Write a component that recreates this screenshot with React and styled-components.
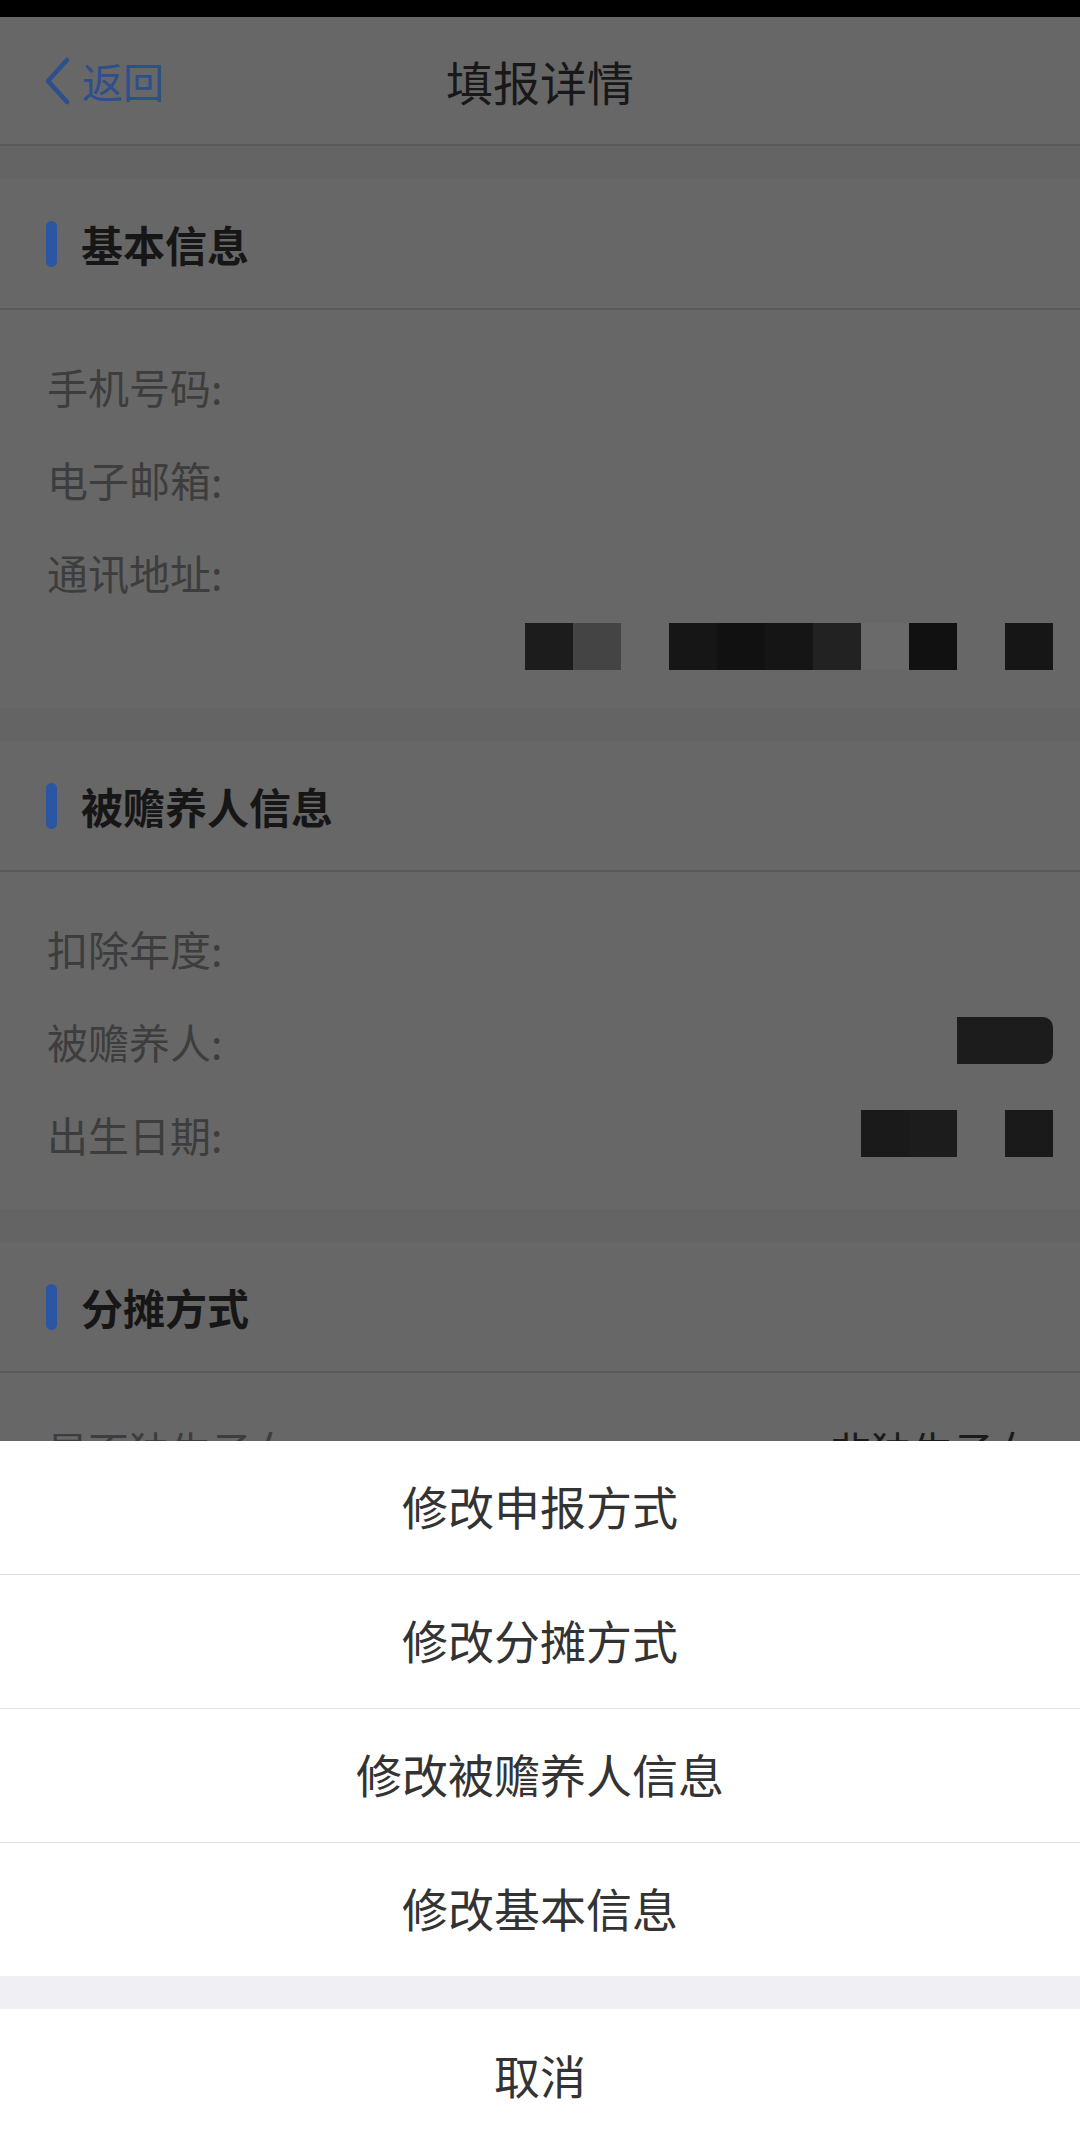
import React from "react";
import styled, { createGlobalStyle } from "styled-components";

const GlobalStyle = createGlobalStyle`
  html, body {
    margin: 0;
    padding: 0;
    background: #646464;
    overflow: hidden;
  }
  body {
    font-family: "Noto Sans CJK SC", "Noto Sans", sans-serif;
  }
`;

const Screen = styled.div`
  position: relative;
  width: 1080px;
  height: 2144px;
  overflow: hidden;
  background: #646464;
`;

const StatusBar = styled.div`
  height: 17px;
  background: #000;
`;

const NavBar = styled.div`
  height: 127px;
  display: grid;
  grid-template-columns: 1fr auto 1fr;
  align-items: center;
  padding: 0 43px;
  background: #676767;
  border-bottom: 2px solid #5a5a5a;
`;

const BackLink = styled.div`
  display: flex;
  align-items: center;
  gap: 11px;
  color: #2d4f8c;
  font-size: 41px;
  line-height: 1;
`;

const NavTitle = styled.div`
  font-size: 47px;
  color: #181818;
  line-height: 1;
`;

const Section = styled.section`
  margin-top: 33px;
  background: #676767;
`;

const SectionHeader = styled.div`
  height: 129px;
  display: flex;
  align-items: center;
  padding-left: 46px;
  border-bottom: 2px solid #5a5a5a;
`;

const Marker = styled.span`
  width: 11px;
  height: 46px;
  border-radius: 6px;
  background: #2a56a3;
`;

const HeaderText = styled.h2`
  margin: 0 0 0 24px;
  font-size: 42px;
  font-weight: 700;
  color: #161616;
  line-height: 1;
`;

const Content = styled.div`
  padding: 29px 0 29px;
`;

const Row = styled.div`
  height: 93px;
  display: flex;
  align-items: center;
  justify-content: space-between;
  padding: 0 27px 0 47px;
`;

const Label = styled.span`
  font-size: 41px;
  color: #3d3d3d;
`;

const Value = styled.span`
  font-size: 41px;
  color: #1b1b1b;
  padding-right: 18px;
`;

const MosaicLine = styled.div`
  display: flex;
  justify-content: flex-end;
  padding-right: 27px;
  margin: 5px 0 9px;
`;

const Mosaic = styled.div`
  display: flex;
`;

const Cell = styled.span`
  width: 48px;
  height: 47px;
  background: ${(p) => p.$tone || "transparent"};
  ${(p) => p.$soft && "border-radius: 0 10px 10px 0;"}
`;

const Sheet = styled.div`
  position: fixed;
  left: 0;
  right: 0;
  bottom: 0;
  background: #efeff4;
`;

const SheetGroup = styled.div`
  background: #fff;
`;

const SheetItem = styled.div`
  height: 127px;
  padding-bottom: 6px;
  display: flex;
  align-items: center;
  justify-content: center;
  font-size: 46px;
  color: #333;
  & + & {
    border-top: 1px solid #e2e2e2;
  }
`;

const CancelItem = styled(SheetItem)`
  margin-top: 33px;
  height: 129px;
  background: #fff;
`;

const Chevron = () => (
  <svg width="28" height="48" viewBox="0 0 28 48">
    <path d="M24 3 L5 24 L24 45" fill="none" stroke="#2d4f8c" strokeWidth="4.5" strokeLinecap="round" strokeLinejoin="round" />
  </svg>
);

const Blocks = ({ cells }) => (
  <Mosaic>
    {cells.map((c, i) => (
      <Cell key={i} $tone={c && c.tone} $soft={c && c.soft} />
    ))}
  </Mosaic>
);

const addressCells = [
  { tone: "#1c1c1c" },
  { tone: "#444444" },
  null,
  { tone: "#161616" },
  { tone: "#111111" },
  { tone: "#151515" },
  { tone: "#222222" },
  { tone: "#6a6a6a" },
  { tone: "#111111" },
  null,
  { tone: "#161616" },
];

const actions = ["修改申报方式", "修改分摊方式", "修改被赡养人信息", "修改基本信息"];

const App = () => {
  return (
    <Screen>
      <GlobalStyle />
      <StatusBar />
      <NavBar>
        <BackLink>
          <Chevron />
          返回
        </BackLink>
        <NavTitle>填报详情</NavTitle>
        <div />
      </NavBar>

      <Section>
        <SectionHeader>
          <Marker />
          <HeaderText>基本信息</HeaderText>
        </SectionHeader>
        <Content>
          <Row>
            <Label>手机号码:</Label>
          </Row>
          <Row>
            <Label>电子邮箱:</Label>
          </Row>
          <Row>
            <Label>通讯地址:</Label>
          </Row>
          <MosaicLine>
            <Blocks cells={addressCells} />
          </MosaicLine>
        </Content>
      </Section>

      <Section>
        <SectionHeader>
          <Marker />
          <HeaderText>被赡养人信息</HeaderText>
        </SectionHeader>
        <Content>
          <Row>
            <Label>扣除年度:</Label>
          </Row>
          <Row>
            <Label>被赡养人:</Label>
            <Blocks cells={[{ tone: "#1c1c1c" }, { tone: "#1c1c1c", soft: true }]} />
          </Row>
          <Row>
            <Label>出生日期:</Label>
            <Blocks cells={[{ tone: "#1a1a1a" }, { tone: "#1c1c1c" }, null, { tone: "#1a1a1a" }]} />
          </Row>
        </Content>
      </Section>

      <Section>
        <SectionHeader>
          <Marker />
          <HeaderText>分摊方式</HeaderText>
        </SectionHeader>
        <Content>
          <Row>
            <Label>是否独生子女:</Label>
            <Value>非独生子女</Value>
          </Row>
        </Content>
      </Section>

      <Sheet>
        <SheetGroup>
          {actions.map((a) => (
            <SheetItem key={a}>{a}</SheetItem>
          ))}
        </SheetGroup>
        <CancelItem>取消</CancelItem>
      </Sheet>
    </Screen>
  );
};

export default App;
